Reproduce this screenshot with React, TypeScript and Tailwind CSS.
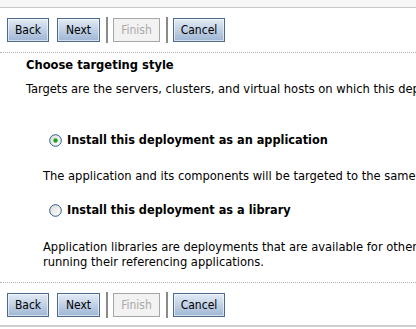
import React from "react";

const font = { fontFamily: "Tahoma, 'DejaVu Sans Condensed', 'Liberation Sans', sans-serif" };

function WizardButton({ label, width, disabled }: { label: string; width: string; disabled?: boolean }) {
  if (disabled) {
    return (
      <div className={`${width} h-[24px] flex items-center justify-center border border-[#a6a6a6] bg-[#f2f2f2] text-[12px] text-[#a9a9a9]`}>
        {label}
      </div>
    );
  }
  return (
    <div className={`${width} h-[24px] flex items-center justify-center border border-[#4e6a8a] bg-gradient-to-b from-[#e3ebf5] to-[#9fb6d4] text-[12px] text-black shadow-[inset_0_0_0_1px_rgba(255,255,255,0.55)]`}>
      {label}
    </div>
  );
}

function Separator() {
  return <div className="w-[2px] h-[26px] bg-[#8a8a8a] ml-[6px] mr-[5px]" />;
}

function ButtonBar() {
  return (
    <div className="flex items-center pl-[7px]">
      <WizardButton label="Back" width="w-[42px]" />
      <div className="w-[8px]" />
      <WizardButton label="Next" width="w-[43px]" />
      <Separator />
      <WizardButton label="Finish" width="w-[47px]" disabled />
      <Separator />
      <WizardButton label="Cancel" width="w-[52px]" />
    </div>
  );
}

function Radio({ checked }: { checked?: boolean }) {
  const id = checked ? "rg1" : "rg2";
  return (
    <svg width="13" height="13" viewBox="0 0 13 13" className="shrink-0">
      <defs>
        <linearGradient id={id} x1="0" y1="0" x2="1" y2="1">
          <stop offset="0" stopColor="#dcdcd6" />
          <stop offset="1" stopColor="#ffffff" />
        </linearGradient>
      </defs>
      <circle cx="6.5" cy="6.5" r="5.8" fill={`url(#${id})`} stroke="#2a5a8a" strokeWidth="1" />
      {checked && <circle cx="6.5" cy="6.5" r="2.2" fill="#21a121" />}
    </svg>
  );
}

export default function App() {
  return (
    <div className="w-[416px] h-[329px] bg-white overflow-hidden flex flex-col" style={font}>
      <div className="h-[8px] bg-[#f7f7f7] border-b border-[#c9c9c9] shrink-0" />
      <div className="pt-[9px]">
        <ButtonBar />
      </div>
      <div className="mt-[9px] border-t border-dotted border-[#b4b4b4]" />

      <div className="pl-[26px] whitespace-nowrap text-black">
        <p className="mt-[4px] text-[12.8px] font-bold leading-[16px]">Choose targeting style</p>
        <p className="mt-[8px] text-[12.8px] leading-[15px]">
          Targets are the servers, clusters, and virtual hosts on which this deployment will be deployed.
        </p>

        <div className="mt-[36px] pl-[23px] flex items-center gap-[5px]">
          <Radio checked />
          <span className="text-[12.6px] font-bold leading-[16px]">Install this deployment as an application</span>
        </div>
        <p className="mt-[20px] pl-[17px] text-[12.8px] leading-[15px]">
          The application and its components will be targeted to the same locations.
        </p>

        <div className="mt-[19px] pl-[23px] flex items-center gap-[5px]">
          <Radio />
          <span className="text-[12.6px] font-bold leading-[16px]">Install this deployment as a library</span>
        </div>
        <div className="mt-[21px] pl-[17px] text-[12.8px] leading-[15px]">
          <p>Application libraries are deployments that are available for other deployments to share.</p>
          <p>running their referencing applications.</p>
        </div>
      </div>

      <div className="mt-[13px] border-t border-dotted border-[#b4b4b4]" />
      <div className="pt-[9px]">
        <ButtonBar />
      </div>
      <div className="mt-[7px] border-b-2 border-[#cfcfcf]" />
    </div>
  );
}
